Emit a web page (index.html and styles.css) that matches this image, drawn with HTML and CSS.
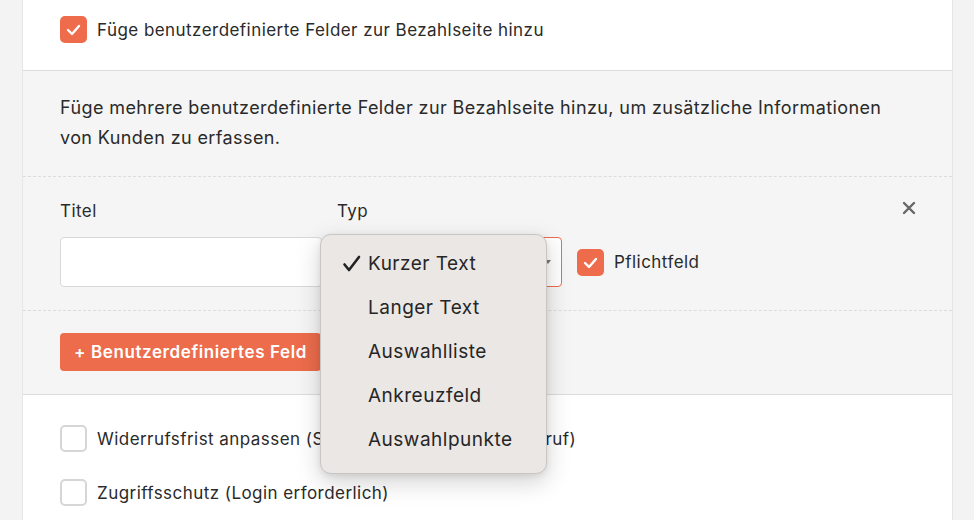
FILE: index.html
```html
<!DOCTYPE html>
<html lang="de">
<head>
<meta charset="utf-8">
<link rel="stylesheet" href="styles.css">
</head>
<body>
<div class="card">
  <div class="sec-top">
    <label class="check">
      <span class="box on"><svg viewBox="0 0 27 27" width="27" height="27"><polyline points="8,14 12,18 19,10" fill="none" stroke="#fff" stroke-width="2.4" stroke-linecap="round" stroke-linejoin="round"/></svg></span>
      <span>Füge benutzerdefinierte Felder zur Bezahlseite hinzu</span>
    </label>
  </div>
  <div class="sec-gray">
    <p class="desc">Füge mehrere benutzerdefinierte Felder zur Bezahlseite hinzu, um zusätzliche Informationen von Kunden zu erfassen.</p>
    <div class="fields">
      <div class="col col-title">
        <div class="lbl">Titel</div>
        <div class="input"></div>
      </div>
      <div class="col col-type">
        <div class="lbl">Typ</div>
        <div class="select"><span class="caret"></span></div>
        <div class="menu">
          <div class="item"><svg class="tick" viewBox="0 0 20 20" width="20" height="20"><polyline points="2.5,10.5 7,16 17,3" fill="none" stroke="#222" stroke-width="2.6" stroke-linecap="round" stroke-linejoin="round"/></svg>Kurzer Text</div>
          <div class="item">Langer Text</div>
          <div class="item">Auswahlliste</div>
          <div class="item">Ankreuzfeld</div>
          <div class="item">Auswahlpunkte</div>
        </div>
      </div>
      <label class="check col-req">
        <span class="box on"><svg viewBox="0 0 27 27" width="27" height="27"><polyline points="8,14 12,18 19,10" fill="none" stroke="#fff" stroke-width="2.4" stroke-linecap="round" stroke-linejoin="round"/></svg></span>
        <span>Pflichtfeld</span>
      </label>
      <div class="close"><svg viewBox="0 0 14 14" width="14" height="14"><path d="M2 2 L12 12 M12 2 L2 12" stroke="#666" stroke-width="2.4" stroke-linecap="round"/></svg></div>
    </div>
    <div class="actions">
      <button class="btn">+ Benutzerdefiniertes Feld</button>
    </div>
  </div>
  <div class="sec-white">
    <label class="check">
      <span class="box"></span>
      <span>Widerrufsfrist anpassen (Sofortiger Start ohne Widerruf)</span>
    </label>
    <label class="check">
      <span class="box"></span>
      <span>Zugriffsschutz (Login erforderlich)</span>
    </label>
  </div>
</div>
</body>
</html>
```
FILE: styles.css
```css
* { box-sizing: border-box; }
html, body { margin: 0; padding: 0; }
body {
  background: #f3f3f3;
  font-family: Inter, "Noto Sans", "Liberation Sans", sans-serif;
  font-size: 17px;
  letter-spacing: 0.45px;
  color: #2a2a2a;
  height: 520px;
  overflow: hidden;
}
.card {
  margin-left: 22px;
  width: 931px;
  min-height: 520px;
  background: #fff;
  border-left: 1px solid #e6e6e6;
  border-right: 1px solid #e6e6e6;
}
.check {
  display: flex;
  align-items: center;
  gap: 10px;
}
.box {
  width: 27px;
  height: 27px;
  border-radius: 5px;
  border: 2px solid #d6d6d6;
  background: #fff;
  flex: none;
  display: flex;
}
.box.on {
  background: #ee6c4c;
  border: none;
}
.sec-top {
  height: 71px;
  padding: 16px 37px 0;
  border-bottom: 1px solid #dcdcdc;
}
.sec-gray {
  background: #f5f5f5;
  border-bottom: 1px solid #dcdcdc;
}
.desc {
  margin: 0;
  padding: 22px 37px 23px;
  line-height: 30px;
  font-size: 18px;
  letter-spacing: 0.4px;
}
.fields {
  border-top: 1px dashed #dcdcdc;
  padding: 24px 37px 23px;
  display: grid;
  grid-template-columns: 262px 225px auto 1fr;
  column-gap: 15px;
  align-items: end;
  position: relative;
}
.lbl {
  line-height: 20px;
  margin-bottom: 16px;
}
.input {
  height: 50px;
  background: #fff;
  border: 1px solid #d9d9d9;
  border-radius: 4px;
}
.col-type { position: relative; }
.select {
  height: 50px;
  background: #fff;
  border: 1px solid #ee6c4c;
  border-radius: 4px;
  position: relative;
}
.caret {
  position: absolute;
  right: 10px;
  top: 22px;
  border-left: 3.5px solid transparent;
  border-right: 3.5px solid transparent;
  border-top: 4px solid #777;
}
.col-req {
  height: 50px;
}
.close {
  justify-self: end;
  align-self: start;
  margin-top: -2px;
  margin-right: -1px;
  width: 14px;
  height: 14px;
}
.menu {
  position: absolute;
  left: -17px;
  top: 33px;
  width: 227px;
  height: 240px;
  background: #ebe7e4;
  border: 1px solid #c9c5c2;
  border-radius: 11px;
  box-shadow: 0 8px 24px rgba(0,0,0,0.18), 0 2px 6px rgba(0,0,0,0.08);
  padding: 7px 0 12px;
  z-index: 5;
  font-size: 19px;
  letter-spacing: 0.5px;
  color: #262626;
}
.item {
  height: 44px;
  line-height: 44px;
  padding-left: 47px;
  position: relative;
}
.tick {
  position: absolute;
  left: 21px;
  top: 12px;
}
.actions {
  border-top: 1px dashed #dcdcdc;
  padding: 22px 37px 23px;
}
.btn {
  height: 38px;
  padding: 0 14px;
  border: none;
  border-radius: 4px;
  background: #ec6c4c;
  color: #fff;
  font-family: inherit;
  font-size: 17px;
  font-weight: 600;
  letter-spacing: 0.6px;
}
.sec-white {
  padding: 30px 37px 0;
  display: flex;
  flex-direction: column;
  gap: 27px;
}
```
